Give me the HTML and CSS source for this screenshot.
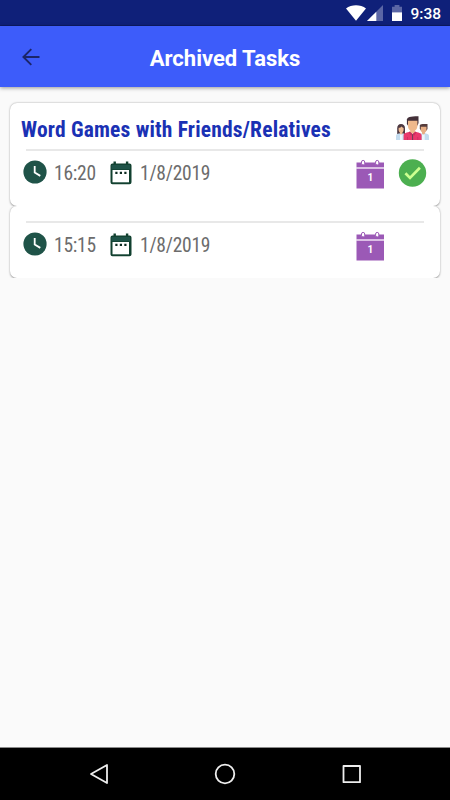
FILE: index.html
```html
<!DOCTYPE html>
<html lang="en">
<head>
    <meta charset="UTF-8">
    <meta name="viewport" content="width=device-width, initial-scale=1.0">
    <title>Archived Tasks</title>
    <link rel="stylesheet" href="styles.css">
</head>
<body>
    <!-- Shared icons -->
    <svg class="sprite" width="0" height="0">
        <symbol id="icon-clock" viewBox="0 0 24 24">
            <circle cx="12" cy="12" r="11.6" fill="#1f5348"/>
            <path d="M11.7 6v6.600l5.600 3.300" fill="none" stroke="#fff" stroke-width="1.8"/>
        </symbol>
        <symbol id="icon-date" viewBox="0 0 22 24">
            <path d="M3.500 0.500h2.400v2h10v-2h2.400v2h1.200a2 2 0 0 1 2 2v16.800a2 2 0 0 1-2 2h-17a2 2 0 0 1-2-2V4.500a2 2 0 0 1 2-2h1z" fill="#11402f"/>
            <path d="M1.500 3.800h18.500v4.500H1.500z" fill="#1f5348"/>
            <path d="M2.500 9h16.500v12.300H2.500z" fill="#fff"/>
            <path d="M5.300 10.800h2.200v2.200H5.300zM9.800 10.800H12v2.200H9.800zM14.300 10.800h2.200v2.200h-2.200z" fill="#0b2a20"/>
        </symbol>
    </svg>

    <div class="status-bar">
        <svg class="wifi" width="20" height="16" viewBox="0 0 20 16"><path d="M0 3.500C5.500-0.900 14.500-0.900 20 3.500L10 15.800z" fill="#fff"/></svg>
        <svg class="signal" width="16" height="16" viewBox="0 0 16 16"><path d="M16 0v16H0z" fill="#5b66a5"/><path d="M9.300 6.700V16H0z" fill="#fff"/></svg>
        <svg class="battery" width="10" height="16" viewBox="0 0 10 16"><path d="M0 1.700h2.600V0h4.800v1.700H10V8H0z" fill="#5b66a5"/><path d="M0 7.400h10V16H0z" fill="#fff"/></svg>
        <span class="status-time">9:38</span>
    </div>

    <header>
        <svg class="back" width="18" height="18" viewBox="0 0 18 18"><path d="M17.500 9H1.500M9.300 1.100L1.400 9l7.900 7.900" fill="none" stroke="#1b2569" stroke-width="1.900"/></svg>
        <h1>Archived Tasks</h1>
    </header>

    <main>
        <div class="task-card">
            <div class="task-title">
                <h2>Word Games with Friends/Relatives</h2>
                <svg class="people" width="33" height="24" viewBox="0 0 33 24">
                    <path d="M1.200 18V12.500C1.200 9.500 2.500 8 5 8s4 1.500 4 4.500V18z" fill="#4c3740"/>
                    <path d="M2.600 11.800c1.500 0 2.300-.6 3-1.300.6.900 1.300 1.300 2 1.500v2c0 1.500-1.100 2.900-2.500 2.900s-2.500-1.400-2.500-2.900zM4 16h2.500v3H4z" fill="#eebc94"/>
                    <path d="M0 24v-4c0-1.500 1-2 3.500-2.700L5.200 19l1.700-1.700L10 18.500V24z" fill="#c4dcef"/>
                    <path d="M4 18.500h2.500V24H4z" fill="#edf5fb"/>
                    <path d="M23.800 12.500V9.500C24.200 8 25.500 8 31.500 8v5l-1 1.500h-5.700z" fill="#553b3b"/>
                    <path d="M24.800 10.800h5.700v3c0 1.800-1.300 3.200-2.900 3.200s-2.800-1.400-2.800-3.200zM26 16h3v3h-3z" fill="#e7ae84"/>
                    <path d="M22.500 24v-5.500l3.200-1.200 1.700 1.700 1.700-1.700c2.800.7 3.900 1.200 3.900 2.700v4z" fill="#c4dcef"/>
                    <path d="M26 18.500h2.700V24H26z" fill="#edf5fb"/>
                    <path d="M10.900 8V3.500C11.400 1 13.500.3 22.500.2V7l-1 2.500h-9.600z" fill="#443039"/>
                    <path d="M12 4.800h9.400v5.200c0 3-2.100 5-4.700 5s-4.700-2-4.700-5zM14.100 13h5v4.500h-5z" fill="#efb98c"/>
                    <path d="M7.600 24v-4.500c0-2 1.500-2.600 6-3.800l3 2.500 3-2.500c4.500 1.200 6 1.800 6 3.800V24z" fill="#e9386c"/>
                    <path d="M13.600 15.500l3 2.500-1.500 1.700-2.300-3.200zM19.600 15.500l-3 2.500 1.500 1.700 2.300-3.200zM11 21h.8v3H11zM21.400 21h.8v3h-.8z" fill="#c92f60"/>
                    <path d="M16.100 18.300h1V24h-1z" fill="#684055"/>
                </svg>
            </div>
            <div class="task-info">
                <svg class="clock"><use href="#icon-clock"/></svg>
                <span class="time">16:20</span>
                <svg class="date-icon"><use href="#icon-date"/></svg>
                <span class="date">1/8/2019</span>
                <svg class="day" viewBox="0 0 28 30">
                    <path d="M0.500 3.500h27.500v5h-27.500zM0.500 9.500h27.500v20h-27.500z" fill="#9b59b6"/>
                    <path d="M0.500 8.500h27.500v1h-27.500z" fill="#e8d3f0"/>
                    <rect x="5.500" y="1.400" width="3.200" height="4.600" rx="1.600" fill="#fff" stroke="#9b59b6"/>
                    <rect x="19.600" y="1.400" width="3.200" height="4.600" rx="1.600" fill="#fff" stroke="#9b59b6"/>
                    <text x="14.200" y="22" text-anchor="middle" class="day-number">1</text>
                </svg>
                <svg class="done" viewBox="0 0 28 28"><circle cx="14.500" cy="14" r="13.700" fill="#4caf50"/><path d="M7.400 14.300l4.600 4.600L21.900 8.700" fill="none" stroke="#ccff90" stroke-width="2.700"/></svg>
            </div>
        </div>
        <div class="task-card untitled">
            <div class="task-info">
                <svg class="clock"><use href="#icon-clock"/></svg>
                <span class="time">15:15</span>
                <svg class="date-icon"><use href="#icon-date"/></svg>
                <span class="date">1/8/2019</span>
                <svg class="day" viewBox="0 0 28 30">
                    <path d="M0.500 3.500h27.500v5h-27.500zM0.500 9.500h27.500v20h-27.500z" fill="#9b59b6"/>
                    <path d="M0.500 8.500h27.500v1h-27.500z" fill="#e8d3f0"/>
                    <rect x="5.500" y="1.400" width="3.200" height="4.600" rx="1.600" fill="#fff" stroke="#9b59b6"/>
                    <rect x="19.600" y="1.400" width="3.200" height="4.600" rx="1.600" fill="#fff" stroke="#9b59b6"/>
                    <text x="14.200" y="22" text-anchor="middle" class="day-number">1</text>
                </svg>
            </div>
        </div>
    </main>

    <nav class="nav-bar">
        <svg width="22" height="22" viewBox="0 0 22 22"><path d="M19 2v18L3 11z"/></svg>
        <svg width="22" height="22" viewBox="0 0 22 22"><circle cx="11" cy="11" r="9.300"/></svg>
        <svg width="22" height="22" viewBox="0 0 22 22"><rect x="3.500" y="3" width="16.500" height="16.200"/></svg>
    </nav>
</body>
</html>
```
FILE: styles.css
```css
* {
    box-sizing: border-box;
}

body {
    margin: 0;
    height: 800px;
    display: flex;
    flex-direction: column;
    background-color: #fafafa;
    font-family: Roboto, sans-serif;
    overflow: hidden;
}

svg {
    display: block;
    flex-shrink: 0;
}

.sprite {
    position: absolute;
}

.status-bar {
    height: 26px;
    padding: 1px 9px 0 0;
    display: flex;
    align-items: center;
    justify-content: flex-end;
    background-color: #0f2079;
    border-bottom: 1px solid #0d1b66;
    color: white;
}

.signal {
    margin-left: 1px;
}

.battery {
    margin-left: 9px;
}

.status-time {
    margin: 2px 0 0 8px;
    font-size: 15.5px;
    font-weight: 500;
    line-height: 22px;
}

header {
    height: 61px;
    display: grid;
    grid-template-columns: 1fr auto 1fr;
    align-items: center;
    padding: 0 22px;
    background-color: #3d5cfa;
    box-shadow: 0 1px 4px rgba(0, 0, 0, 0.4);
}

header h1 {
    margin: 4px 0 0;
    font-size: 22px;
    font-weight: 700;
    line-height: 26px;
    color: white;
}

main {
    flex: 1;
    padding: 16px 10px 0;
}

.task-card {
    height: 103px;
    padding: 10px 11px 0;
    background-color: white;
    border-radius: 7px;
    box-shadow: 0 0.5px 2px rgba(0, 0, 0, 0.4);
    clip-path: inset(-3px -3px 0 -3px);
}

.task-card.untitled {
    height: 72px;
    padding-top: 15px;
    clip-path: inset(0 -3px 0 -3px);
}

.task-title {
    height: 36px;
    display: flex;
    justify-content: space-between;
}

.task-title h2 {
    margin: 5px 0 0;
    font-family: "Roboto Condensed", Roboto, sans-serif;
    font-stretch: 75%;
    font-size: 21.5px;
    font-weight: 700;
    line-height: 24px;
    letter-spacing: 0.18px;
    color: #1a31b4;
    white-space: nowrap;
}

.people {
    margin-top: 3px;
}

.task-info {
    height: 50px;
    margin: 0 5px;
    border-top: 2px solid #e8e8e8;
    padding-top: 8px;
    display: flex;
    align-items: flex-start;
    font-family: "Roboto Condensed", Roboto, sans-serif;
    font-stretch: 75%;
    font-size: 19.5px;
    font-weight: 400;
    line-height: 30px;
    letter-spacing: -0.25px;
    color: #6c6c6c;
}

.clock {
    width: 24px;
    height: 24px;
    margin: 1px 0 0 -3px;
}

.time {
    width: 48px;
    flex-shrink: 0;
    margin-left: 7px;
}

.date-icon {
    width: 22px;
    height: 24px;
    margin: 2px 0 0 8px;
}

.date {
    width: 206px;
    flex-shrink: 0;
    margin-left: 8px;
}

.day {
    width: 28px;
    height: 30px;
    margin-left: 10px;
}

.day-number {
    font-family: Roboto, sans-serif;
    font-stretch: 100%;
    font-size: 10px;
    font-weight: 700;
    fill: white;
}

.done {
    width: 28px;
    height: 28px;
    margin-left: 14px;
    overflow: visible;
}

.nav-bar {
    height: 53px;
    display: flex;
    align-items: center;
    justify-content: space-between;
    padding: 0 88px;
    background-color: black;
    border-top: 1px solid #8a8a8a;
}

.nav-bar svg {
    fill: none;
    stroke: #eee;
    stroke-width: 1.8;
    stroke-linejoin: round;
}
```
